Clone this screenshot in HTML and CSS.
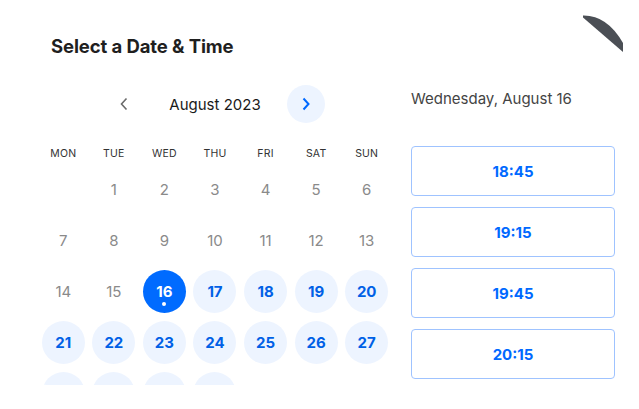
FILE: index.html
```html
<!DOCTYPE html>
<html>
<head>
<meta charset="utf-8">
<link rel="stylesheet" href="styles.css">
</head>
<body>
<div class="card">
  <svg class="ribbon" width="40" height="40" viewBox="0 0 40 40"><path d="M0 0.5 Q24 0 40 28 L40 37 L0 2.5 Z" fill="#4b4f55"/></svg>
  <h1 class="title">Select a Date &amp; Time</h1>
  <div class="main">
    <div class="calendar">
      <div class="nav">
        <button class="nav-btn prev"><svg width="10" height="14" viewBox="0 0 10 14"><path d="M7.5 1.5 L2.5 7 L7.5 12.5" fill="none" stroke="#6b6b6b" stroke-width="1.6"/></svg></button>
        <div class="month">August 2023</div>
        <button class="nav-btn next"><svg width="10" height="14" viewBox="0 0 10 14"><path d="M2.5 1.5 L7.5 7 L2.5 12.5" fill="none" stroke="#0069ff" stroke-width="2"/></svg></button>
      </div>
      <div class="weekdays">
        <span>Mon</span><span>Tue</span><span>Wed</span><span>Thu</span><span>Fri</span><span>Sat</span><span>Sun</span>
      </div>
      <div class="days">
        <span class="day empty"></span>
        <span class="day">1</span><span class="day">2</span><span class="day">3</span><span class="day">4</span><span class="day">5</span><span class="day">6</span>
        <span class="day">7</span><span class="day">8</span><span class="day">9</span><span class="day">10</span><span class="day">11</span><span class="day">12</span><span class="day">13</span>
        <span class="day">14</span><span class="day">15</span><span class="day selected">16</span><span class="day avail">17</span><span class="day avail">18</span><span class="day avail">19</span><span class="day avail">20</span>
        <span class="day avail">21</span><span class="day avail">22</span><span class="day avail">23</span><span class="day avail">24</span><span class="day avail">25</span><span class="day avail">26</span><span class="day avail">27</span>
        <span class="day avail">28</span><span class="day avail">29</span><span class="day avail">30</span><span class="day avail">31</span>
      </div>
    </div>
    <div class="times">
      <div class="date-label">Wednesday, August 16</div>
      <div class="slots">
        <button class="slot">18:45</button>
        <button class="slot">19:15</button>
        <button class="slot">19:45</button>
        <button class="slot">20:15</button>
      </div>
    </div>
  </div>
</div>
</body>
</html>
```

FILE: styles.css
```css
* { box-sizing: border-box; }
html, body { margin: 0; padding: 0; background: #fff; }
body { font-family: Inter, "Liberation Sans", sans-serif; color: #1a1a1a; }

.card {
  position: relative;
  margin: 15px 0 0 25px;
  width: 598px;
  height: 370px;
  overflow: hidden;
  border-radius: 28px 0 0 22px;
  background: #fff;
}
.ribbon { position: absolute; top: 0; right: 0; }

.title {
  margin: 0;
  padding: 19px 0 0 26px;
  font-size: 18.5px;
  line-height: 24px;
  font-weight: 700;
  letter-spacing: -0.1px;
  color: #1f1f1f;
}

.main { display: flex; margin-top: 27px; }

.calendar { width: 354px; margin-left: 13px; }

.nav { display: flex; justify-content: center; align-items: center; gap: 26px; height: 38px; }
.nav-btn {
  width: 38px; height: 38px; border: 0; border-radius: 50%;
  background: transparent; display: flex; align-items: center; justify-content: center; padding: 0;
}
.nav-btn.next { background: #edf4ff; }
.month { font-size: 15px; color: #1a1a1a; white-space: nowrap; }

.weekdays {
  display: grid; grid-template-columns: repeat(7, 1fr);
  margin-top: 20px; height: 20px; align-items: center;
  text-transform: uppercase; font-size: 10.5px; color: #333; text-align: center; letter-spacing: 0.2px;
}

.days { display: grid; grid-template-columns: repeat(7, 1fr); grid-auto-rows: 51px; margin-top: 0.5px; }
.day {
  position: relative;
  justify-self: center; align-self: center;
  width: 43px; height: 43px; border-radius: 50%;
  display: flex; align-items: center; justify-content: center;
  font-size: 15px; color: #8a8a8a;
}
.day.avail { background: #edf4ff; color: #0060e6; font-weight: 700; }
.day.selected { background: #006bff; color: #fff; font-weight: 700; }
.day.selected::after {
  content: ""; position: absolute; left: 50%; top: 32px; width: 4px; height: 4px; margin-left: -2px;
  border-radius: 50%; background: #fff;
}

.times { width: 204px; margin-left: 19px; }
.date-label { font-size: 15px; line-height: 28px; color: #444; }
.slots { display: flex; flex-direction: column; gap: 11px; margin-top: 33px; }
.slot {
  height: 50px; width: 204px; border: 1px solid #9fc3ff; border-radius: 4px; background: #fff;
  font-family: inherit; font-size: 15px; font-weight: 700; color: #0069ff; padding: 0;
}
```
